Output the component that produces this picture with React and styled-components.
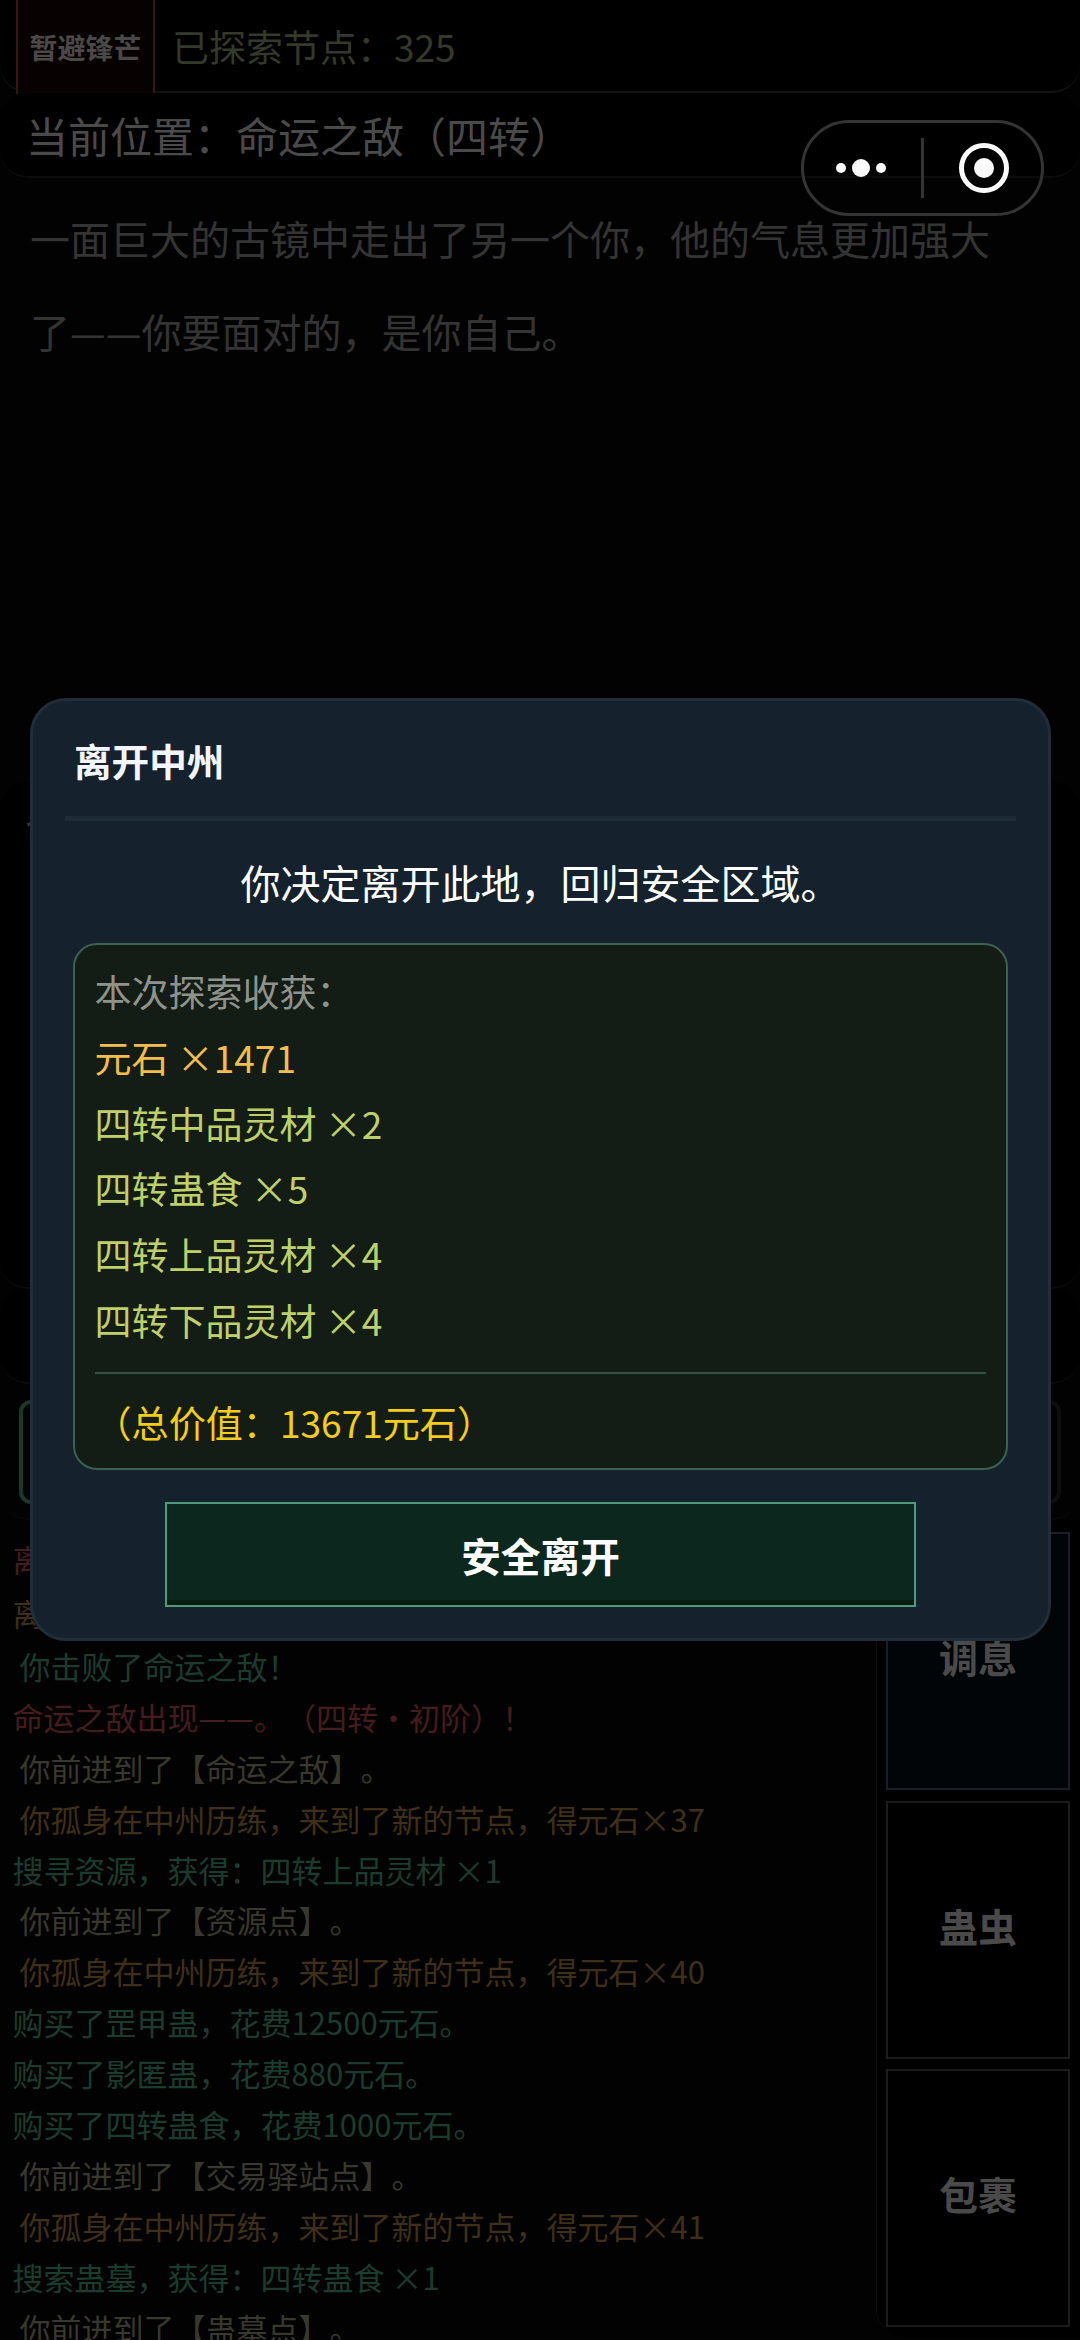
import React from 'react'
import styled, { createGlobalStyle } from 'styled-components'

const rewards = [
  { id: 1, name: '元石', count: 1471, color: '#f3bd4e' },
  { id: 2, name: '四转中品灵材', count: 2, color: '#bfd068' },
  { id: 3, name: '四转蛊食', count: 5, color: '#bfd068' },
  { id: 4, name: '四转上品灵材', count: 4, color: '#bfd068' },
  { id: 5, name: '四转下品灵材', count: 4, color: '#bfd068' },
]

const logColors = {
  danger: '#451c1e',
  gold: '#3f2f16',
  gain: '#1a3c2f',
  move: '#38382d',
}

// the newest entry comes first
const logs = [
  { id: 1, type: 'danger', text: '离开', height: 54 },
  { id: 2, type: 'gold', text: '离开', height: 53 },
  { id: 3, type: 'gain', text: ' 你击败了命运之敌！' },
  { id: 4, type: 'danger', text: '命运之敌出现——。（四转·初阶）！' },
  { id: 5, type: 'move', text: ' 你前进到了【命运之敌】。' },
  { id: 6, type: 'gold', text: ' 你孤身在中州历练，来到了新的节点，得元石×37' },
  { id: 7, type: 'gain', text: '搜寻资源，获得：四转上品灵材 ×1' },
  { id: 8, type: 'move', text: ' 你前进到了【资源点】。' },
  { id: 9, type: 'gold', text: ' 你孤身在中州历练，来到了新的节点，得元石×40' },
  { id: 10, type: 'gain', text: '购买了罡甲蛊，花费12500元石。' },
  { id: 11, type: 'gain', text: '购买了影匿蛊，花费880元石。' },
  { id: 12, type: 'gain', text: '购买了四转蛊食，花费1000元石。' },
  { id: 13, type: 'move', text: ' 你前进到了【交易驿站点】。' },
  { id: 14, type: 'gold', text: ' 你孤身在中州历练，来到了新的节点，得元石×41' },
  { id: 15, type: 'gain', text: '搜索蛊墓，获得：四转蛊食 ×1' },
  { id: 16, type: 'move', text: ' 你前进到了【蛊墓点】。' },
]

export default function App() {
  return (
    <Screen>
      <GlobalStyle />
      <TopBar>
        <RetreatButton>暂避锋芒</RetreatButton>
        <NodeCount>已探索节点：325</NodeCount>
      </TopBar>
      <LocationBar>当前位置：命运之敌（四转）</LocationBar>
      <Story>一面巨大的古镜中走出了另一个你，他的气息更加强大了——你要面对的，是你自己。</Story>
      <EnemyPanel>命运之敌</EnemyPanel>
      <StatusPanel />
      <ActionPanel>
        <ActionButton $primary />
        <ActionButton />
      </ActionPanel>

      <Bottom>
        <LogList>
          {logs.map(log => (
            <LogLine key={log.id} $type={log.type} $height={log.height}>{log.text}</LogLine>
          ))}
        </LogList>
        <SideMenu>
          <SideButton $active>调息</SideButton>
          <SideButton>蛊虫</SideButton>
          <SideButton>包裹</SideButton>
        </SideMenu>
      </Bottom>

      <Dialog>
        <DialogTitle>离开中州</DialogTitle>
        <Message>你决定离开此地，回归安全区域。</Message>
        <RewardBox>
          <RewardLine $color="#8f938c">本次探索收获：</RewardLine>
          {rewards.map(item => (
            <RewardLine key={item.id} $color={item.color}>{item.name} ×{item.count}</RewardLine>
          ))}
          <TotalLine>（总价值：13671元石）</TotalLine>
        </RewardBox>
        <LeaveButton>安全离开</LeaveButton>
      </Dialog>

      <Capsule>
        <svg width="243" height="96" viewBox="0 0 243 96">
          <rect x="1.5" y="1.5" width="240" height="93" rx="46.5" fill="none" stroke="#343434" strokeWidth="3" />
          <g fill="#fff">
            <circle cx="40" cy="48" r="5" />
            <circle cx="60" cy="48" r="9" />
            <circle cx="80" cy="48" r="5" />
            <circle cx="183" cy="48" r="10" />
          </g>
          <rect x="120" y="18" width="3" height="60" fill="#343434" />
          <circle cx="183" cy="48" r="22.5" fill="none" stroke="#fff" strokeWidth="5" />
        </svg>
      </Capsule>
    </Screen>
  )
}

/* ccmp would join the two dashes into one long stroke */
const GlobalStyle = createGlobalStyle`
  * {
    box-sizing: border-box;
  }
  body {
    margin: 0;
    background: #020202;
    font-family: "Noto Sans CJK SC", sans-serif;
    font-feature-settings: "ccmp" 0, "liga" 0, "calt" 0;
    text-spacing-trim: space-all;
  }
  button {
    font-family: inherit;
    border-radius: 0;
    padding: 0;
    margin: 0;
  }
`;

const Screen = styled.div`
  position: relative;
  display: flex;
  flex-direction: column;
  width: 1080px;
  height: 2340px;
  overflow: hidden;
  background: #020202;
`;

const TopBar = styled.div`
  display: flex;
  flex: none;
  height: 93px;
  padding-left: 16px;
  background: #000;
  border-bottom: 2px solid #131313;
  border-radius: 0 0 28px 28px;
`;

const RetreatButton = styled.button`
  width: 139px;
  height: 94px;
  border: 2px solid #341715;
  border-width: 0 2px;
  background: #080101;
  color: #4a4848;
  font-size: 28px;
  font-weight: 700;
  line-height: 94px;
`;

const NodeCount = styled.div`
  margin-left: 17px;
  color: #35392a;
  font-size: 37px;
  line-height: 92px;
`;

const LocationBar = styled.div`
  flex: none;
  height: 85px;
  padding-left: 26px;
  background: #000;
  border-bottom: 2px solid #0b0b0b;
  border-radius: 28px;
  color: #4a4a4a;
  font-size: 42px;
  line-height: 84px;
`;

const Story = styled.div`
  flex: none;
  height: 604px;
  padding: 14px 60px 0 30px;
  color: #343434;
  font-size: 40px;
  line-height: 93px;
`;

const EnemyPanel = styled.div`
  flex: none;
  height: 507px;
  padding: 16px 25px;
  background: #000;
  border-bottom: 2px solid #0a0a0a;
  border-radius: 28px;
  color: #343434;
  font-size: 40px;
  line-height: 60px;
`;

const StatusPanel = styled.div`
  flex: none;
  height: 95px;
  background: #000;
  border-bottom: 2px solid #0a0a0a;
  border-radius: 28px;
`;

const ActionPanel = styled.div`
  display: flex;
  flex: none;
  gap: 20px;
  height: 136px;
  padding: 16px 19px 14px;
  border-bottom: 2px solid #080808;
  border-radius: 28px;
`;

const ActionButton = styled.button`
  flex: 1;
  background: ${({ $primary }) => ($primary ? '#010604' : '#000')};
  border: 4px solid ${({ $primary }) => ($primary ? '#1b382c' : '#0e0e0e')};
  border-radius: 12px;
`;

const Bottom = styled.div`
  display: flex;
  flex: 1;
  min-height: 0;
`;

const LogList = styled.div`
  flex: 1;
  min-width: 0;
  padding: 13px 0 0 12.6px;
  overflow: hidden;
`;

const LogLine = styled.div`
  height: ${({ $height }) => $height || 50.9}px;
  color: ${({ $type }) => logColors[$type]};
  font-size: 31px;
  line-height: 51px;
  white-space: pre;
`;

const SideMenu = styled.div`
  display: flex;
  flex-direction: column;
  gap: 10.5px;
  flex: none;
  width: 204px;
  height: 817px;
  padding: 12px 10px 10px 9px;
  background: #000;
  border-left: 1px solid #0c0c0c;
  border-radius: 0 0 0 28px;
`;

const SideButton = styled.button`
  flex: none;
  height: 258px;
  padding-bottom: 10px;
  border: 2px solid ${({ $active }) => ($active ? '#14202a' : '#1c1c1c')};
  background: ${({ $active }) => ($active ? '#010507' : '#000')};
  color: #4a4a4a;
  font-size: 39px;
  font-weight: 700;
`;

const Dialog = styled.div`
  position: absolute;
  top: 698px;
  left: 30px;
  display: flex;
  flex-direction: column;
  align-items: center;
  width: 1021px;
  height: 943px;
  border: 3px solid #212d38;
  border-radius: 36px;
  background: #15222e;
  color: #fff;
`;

const DialogTitle = styled.div`
  width: 951px;
  height: 120px;
  padding-left: 9px;
  border-bottom: 5px solid #1e2c38;
  color: #f3f5fc;
  font-size: 37.6px;
  font-weight: 700;
  line-height: 118px;
`;

const Message = styled.div`
  height: 122px;
  font-size: 40px;
  line-height: 122px;
`;

const RewardBox = styled.div`
  width: 935px;
  height: 527px;
  padding: 14px 20px 14px 19.5px;
  border: 2px solid #3a6152;
  border-radius: 24px;
  background: #141d15;
`;

const RewardLine = styled.div`
  height: 65.8px;
  color: ${({ $color }) => $color};
  font-size: 37px;
  line-height: 64px;
`;

const TotalLine = styled.div`
  margin-top: 18px;
  border-top: 2px solid #33513f;
  color: #f5cd18;
  font-size: 37.1px;
  line-height: 97px;
`;

const LeaveButton = styled.button`
  width: 751px;
  height: 105px;
  margin-top: 32px;
  border: 2px solid #4e9a7a;
  background: #0b271e;
  box-shadow: inset 0 -5px 0 #071c12;
  color: #fff;
  font-size: 39.7px;
  font-weight: 700;
`;

// floats over the game screen and the dialog backdrop
const Capsule = styled.div`
  position: absolute;
  top: 120px;
  left: 801px;
  width: 243px;
  height: 96px;
  border-radius: 48px;

  svg {
    display: block;
  }
`;
